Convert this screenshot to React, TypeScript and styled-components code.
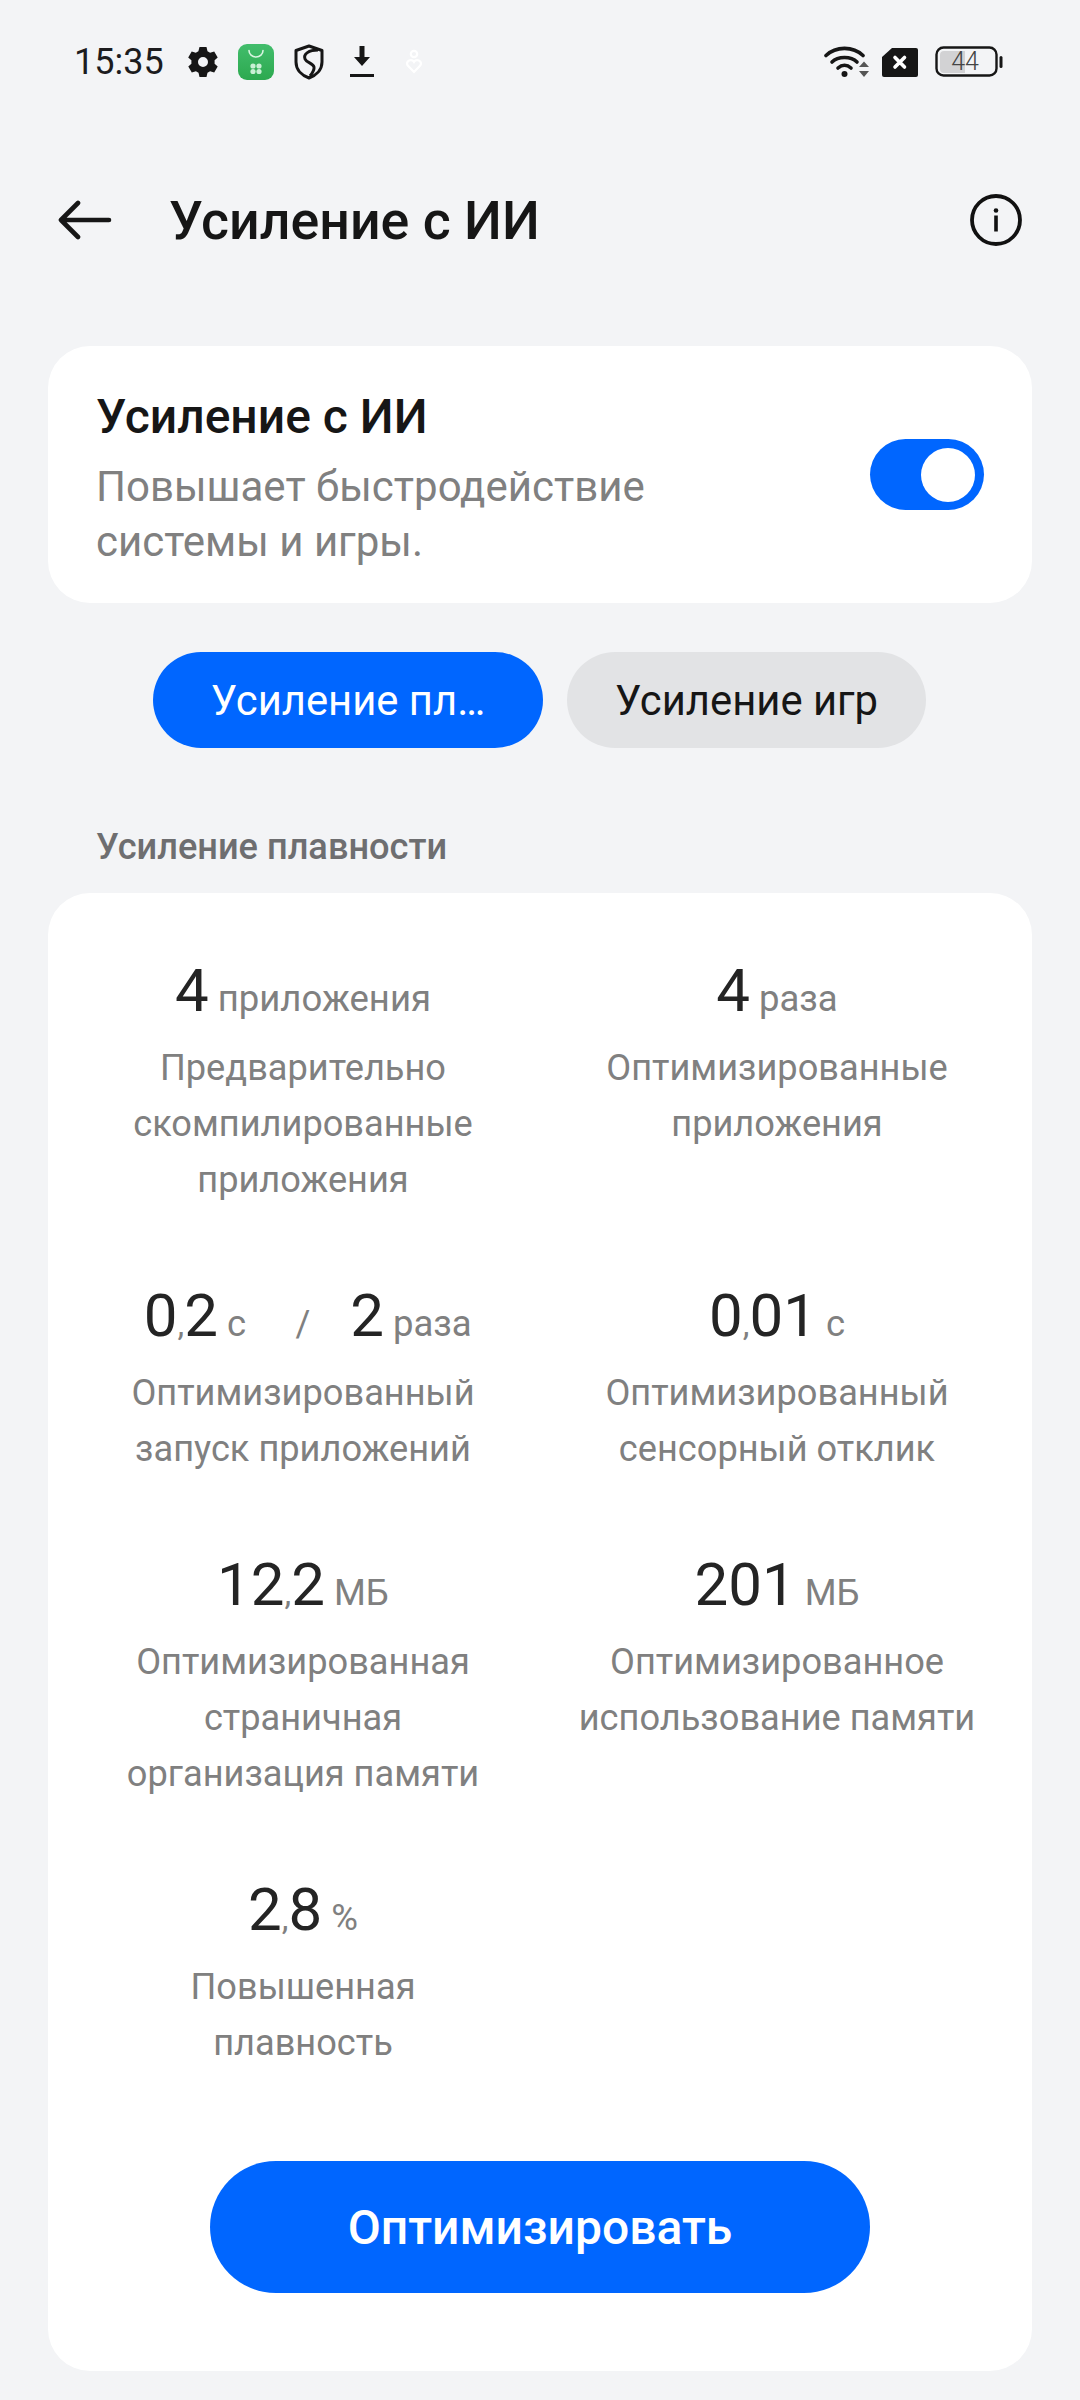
import React from 'react';
import styled, { createGlobalStyle } from 'styled-components';

const GlobalStyle = createGlobalStyle`
  html, body {
    margin: 0;
    padding: 0;
    background: #f3f4f6;
    font-family: Roboto, "Liberation Sans", sans-serif;
  }
`;

const Page = styled.div`
  width: 1080px;
  height: 2400px;
  overflow: hidden;
  background: #f3f4f6;
  display: flex;
  flex-direction: column;
`;

const StatusBar = styled.div`
  height: 124px;
  flex: none;
  display: flex;
  align-items: center;
  padding: 0 77px 0 74px;
`;

const Time = styled.span`
  font-size: 36px;
  color: #1c1c1e;
  width: 114px;
`;

const IconSlot = styled.span<{ $w: number; $gap?: number }>`
  display: flex;
  width: ${p => p.$w}px;
  margin-right: ${p => p.$gap ?? 0}px;
  flex: none;
`;

const Spacer = styled.div`
  flex: 1;
`;

const Header = styled.div`
  height: 100px;
  flex: none;
  margin-top: 46px;
  display: flex;
  align-items: center;
  padding: 0 58px;
`;

const HeaderTitle = styled.h1`
  margin: 0 0 0 57px;
  font-size: 53.7px;
  font-weight: 500;
  color: #161616;
  flex: 1;
`;

const Card = styled.section`
  background: #fff;
  border-radius: 42px;
  margin: 0 48px;
`;

const ToggleCard = styled(Card)`
  margin-top: 76px;
  height: 257px;
  box-sizing: border-box;
  padding: 0 48px 0 48px;
  display: flex;
  align-items: center;
  justify-content: space-between;
`;

const ToggleText = styled.div`
  margin-top: 8px;
`;

const ToggleTitle = styled.div`
  font-size: 48px;
  font-weight: 500;
  color: #161616;
  line-height: 56px;
  margin-bottom: 14px;
`;

const ToggleDesc = styled.div`
  font-size: 42px;
  color: #808080;
  line-height: 55px;
`;

const Toggle = styled.div`
  width: 114px;
  height: 71px;
  border-radius: 36px;
  background: #0066ff;
  display: flex;
  align-items: center;
  justify-content: flex-end;
  padding-right: 9px;
  box-sizing: border-box;
`;

const Knob = styled.div`
  width: 54px;
  height: 54px;
  border-radius: 50%;
  background: #fff;
`;

const Tabs = styled.div`
  display: flex;
  justify-content: flex-start;
  gap: 24px;
  margin: 49px 0 0 153px;
`;

const Tab = styled.div<{ $active?: boolean; $w: number }>`
  width: ${p => p.$w}px;
  height: 96px;
  border-radius: 48px;
  display: flex;
  align-items: center;
  justify-content: center;
  font-size: 41.8px;
  background: ${p => (p.$active ? '#0066ff' : '#e2e3e5')};
  color: ${p => (p.$active ? '#fff' : '#161616')};
`;

const SectionLabel = styled.div`
  font-size: 36.2px;
  font-weight: 500;
  color: #6e6e70;
  line-height: 44px;
  margin: 77px 0 24px 96px;
`;

const StatsCard = styled(Card)`
  height: 1478px;
  box-sizing: border-box;
  padding: 52px 18px 0;
  display: flex;
  flex-direction: column;
`;

const StatsGrid = styled.div`
  display: grid;
  grid-template-columns: 474px 474px;
  row-gap: 62px;
`;

const Stat = styled.div`
  display: flex;
  flex-direction: column;
  align-items: center;
  text-align: center;
`;

const ValueRow = styled.div`
  height: 92px;
  margin-bottom: 3px;
  display: flex;
  align-items: baseline;
  justify-content: center;
  line-height: 92px;
`;

// in a two-value row each value sits in an equal box either side of the slash
const ValuePart = styled.div<{ $split?: boolean }>`
  ${p => (p.$split ? 'width: 190px;' : '')}
  text-align: center;
  white-space: nowrap;
`;

const Num = styled.span`
  font-size: 60px;
  color: #242424;
`;

const Comma = styled.span`
  font-size: 34px;
  color: #808080;
`;

const Unit = styled.span`
  font-size: 36.5px;
  color: #808080;
  margin-left: 9px;
`;

const Slash = styled.span`
  width: 26px;
  text-align: center;
  font-size: 36px;
  color: #808080;
`;

const StatLabel = styled.div`
  font-size: 36.2px;
  line-height: 56px;
  color: #808080;
  white-space: nowrap;
`;

const Optimize = styled.button`
  display: block;
  width: 660px;
  height: 132px;
  margin: auto auto 78px;
  border: none;
  border-radius: 66px;
  background: #0066ff;
  color: #fff;
  font-family: inherit;
  font-size: 48px;
  font-weight: 500;
`;

const Gear = () => (
  <svg width="30" height="30" viewBox="0 0 30 30">
    <path fill="#161616" fillRule="evenodd" d="M11.500 0h7l1 4.200 2.600 1.500 4.100-1.300 3.500 6-3.100 2.900v3.400l3.100 2.900-3.500 6-4.100-1.300-2.600 1.500-1 4.200h-7l-1-4.200-2.600-1.500-4.100 1.300-3.500-6 3.100-2.900v-3.400L0.200 10.400l3.500-6 4.100 1.300 2.600-1.500z M15 10a5 5 0 1 0 0 10 5 5 0 0 0 0-10z" />
  </svg>
);

const StoreIcon = () => (
  <svg width="36" height="36" viewBox="0 0 36 36">
    <defs>
      <linearGradient id="storeGreen" x1="0" y1="0" x2="0" y2="1">
        <stop offset="0" stopColor="#42bd6c" />
        <stop offset="1" stopColor="#2ca94f" />
      </linearGradient>
    </defs>
    <rect width="36" height="36" rx="9" fill="url(#storeGreen)" />
    <path d="M11 6.500a7 6.500 0 0 0 14 0" fill="none" stroke="#d9f5e1" strokeWidth="1.600" strokeLinecap="round" />
    <circle cx="15" cy="22" r="2.600" fill="#c9f0d5" />
    <circle cx="21" cy="22" r="2.600" fill="#c9f0d5" />
    <circle cx="15" cy="27.500" r="2.600" fill="#c9f0d5" />
    <circle cx="21" cy="27.500" r="2.600" fill="#c9f0d5" />
  </svg>
);

const Shield = () => (
  <svg width="30" height="36" viewBox="0 0 30 36">
    <path d="M15 2L28 6.500V18C28 26 22 31.500 15 34 8 31.500 2 26 2 18V6.500z" fill="none" stroke="#161616" strokeWidth="3" strokeLinejoin="round" />
    <path d="M24 6C15 6 9 10 11 15c1.500 4 8 4 9 8 .5 3-1.500 6-4 9" fill="none" stroke="#161616" strokeWidth="3" />
  </svg>
);

const Download = () => (
  <svg width="24" height="32" viewBox="0 0 24 32">
    <path d="M9.500 0h5v11H20L12 20 4 11h5.500z" fill="#161616" />
    <rect y="28" width="24" height="3" fill="#161616" />
  </svg>
);

const Ghost = () => (
  <svg width="20" height="26" viewBox="0 0 20 26">
    <circle cx="10" cy="5" r="3.200" fill="none" stroke="#fff" strokeWidth="2.200" />
    <path d="M3 14.500a3.800 3.800 0 0 1 7-1.500 3.800 3.800 0 0 1 7 1.500c0 1-.5 1.800-1.200 2.500L10 23 4.200 17c-.7-.7-1.200-1.500-1.200-2.500z" fill="none" stroke="#fff" strokeWidth="2.200" />
  </svg>
);

const Wifi = () => (
  <svg width="46" height="34" viewBox="0 0 46 34">
    <g fill="none" stroke="#161616" strokeWidth="3.600" strokeLinecap="round">
      <path d="M2 10.500C12 1 29 1 39 10.500" />
      <path d="M8 17C14 11 27 11 33 17" />
      <path d="M14 23c4-3.500 9-3.500 13 0" />
    </g>
    <circle cx="20.500" cy="29" r="3" fill="#161616" />
    <path d="M35 22l5-5.500 5 5.500zM35 26l5 6 5-6z" fill="#555" />
  </svg>
);

const Sim = () => (
  <svg width="36" height="29" viewBox="0 0 36 29">
    <path d="M10 0h24a2 2 0 0 1 2 2v25a2 2 0 0 1-2 2H2a2 2 0 0 1-2-2V9z" fill="#161616" />
    <path d="M13 9.500l9.500 9.500M22.500 9.500L13 19" stroke="#fff" strokeWidth="3.600" strokeLinecap="round" />
  </svg>
);

const Battery = () => (
  <svg width="68" height="32" viewBox="0 0 68 32">
    <rect x="1.500" y="1.500" width="60" height="28" rx="7" fill="none" stroke="#161616" strokeWidth="2.400" />
    <path d="M9 5h21v22H9a4 4 0 0 1-4-4V9a4 4 0 0 1 4-4z" fill="#d2d2d4" />
    <rect x="64.500" y="10" width="3" height="12" rx="1.500" fill="#161616" />
    <text x="30" y="24" textAnchor="middle" fontSize="25" fontFamily="Roboto, sans-serif" fontWeight="300" fill="#444">44</text>
  </svg>
);

const BackArrow = () => (
  <svg width="54" height="42" viewBox="0 0 54 42">
    <path d="M51 21H3M20 4L3 21l17 17" fill="none" stroke="#161616" strokeWidth="4.600" strokeLinecap="round" strokeLinejoin="round" />
  </svg>
);

const InfoIcon = () => (
  <svg width="52" height="52" viewBox="0 0 52 52">
    <circle cx="26" cy="26" r="24" fill="none" stroke="#111" strokeWidth="3.800" />
    <circle cx="26" cy="16.500" r="2.300" fill="#111" />
    <rect x="24.200" y="21.500" width="3.600" height="16" fill="#111" />
  </svg>
);

type Part = { num: string; frac?: string; unit: string };

const stats: { values: Part[]; lines: string[] }[] = [
  { values: [{ num: '4', unit: 'приложения' }], lines: ['Предварительно', 'скомпилированные', 'приложения'] },
  { values: [{ num: '4', unit: 'раза' }], lines: ['Оптимизированные', 'приложения'] },
  {
    values: [{ num: '0', frac: '2', unit: 'с' }, { num: '2', unit: 'раза' }],
    lines: ['Оптимизированный', 'запуск приложений'],
  },
  { values: [{ num: '0', frac: '01', unit: 'с' }], lines: ['Оптимизированный', 'сенсорный отклик'] },
  { values: [{ num: '12', frac: '2', unit: 'МБ' }], lines: ['Оптимизированная', 'страничная', 'организация памяти'] },
  { values: [{ num: '201', unit: 'МБ' }], lines: ['Оптимизированное', 'использование памяти'] },
  { values: [{ num: '2', frac: '8', unit: '%' }], lines: ['Повышенная', 'плавность'] },
];

const App = () => (
  <Page>
    <GlobalStyle />
    <StatusBar>
      <Time>15:35</Time>
      <IconSlot $w={30} $gap={20}><Gear /></IconSlot>
      <IconSlot $w={36} $gap={20}><StoreIcon /></IconSlot>
      <IconSlot $w={30} $gap={26}><Shield /></IconSlot>
      <IconSlot $w={24} $gap={30}><Download /></IconSlot>
      <IconSlot $w={20}><Ghost /></IconSlot>
      <Spacer />
      <IconSlot $w={46} $gap={12}><Wifi /></IconSlot>
      <IconSlot $w={36} $gap={17}><Sim /></IconSlot>
      <IconSlot $w={68}><Battery /></IconSlot>
    </StatusBar>
    <Header>
      <BackArrow />
      <HeaderTitle>Усиление с ИИ</HeaderTitle>
      <InfoIcon />
    </Header>
    <ToggleCard>
      <ToggleText>
        <ToggleTitle>Усиление с ИИ</ToggleTitle>
        <ToggleDesc>Повышает быстродействие<br />системы и игры.</ToggleDesc>
      </ToggleText>
      <Toggle><Knob /></Toggle>
    </ToggleCard>
    <Tabs>
      <Tab $active $w={390}>Усиление пл…</Tab>
      <Tab $w={359}>Усиление игр</Tab>
    </Tabs>
    <SectionLabel>Усиление плавности</SectionLabel>
    <StatsCard>
      <StatsGrid>
        {stats.map(stat => (
          <Stat key={stat.lines.join(' ')}>
            <ValueRow>
              {stat.values.map((v, i) => (
                <React.Fragment key={v.num + v.unit}>
                  {i > 0 && <Slash>/</Slash>}
                  <ValuePart $split={stat.values.length > 1}>
                    <Num>{v.num}</Num>
                    {v.frac && <Comma>,</Comma>}
                    {v.frac && <Num>{v.frac}</Num>}
                    <Unit>{v.unit}</Unit>
                  </ValuePart>
                </React.Fragment>
              ))}
            </ValueRow>
            {stat.lines.map(line => (
              <StatLabel key={line}>{line}</StatLabel>
            ))}
          </Stat>
        ))}
      </StatsGrid>
      <Optimize>Оптимизировать</Optimize>
    </StatsCard>
  </Page>
);

export default App;
